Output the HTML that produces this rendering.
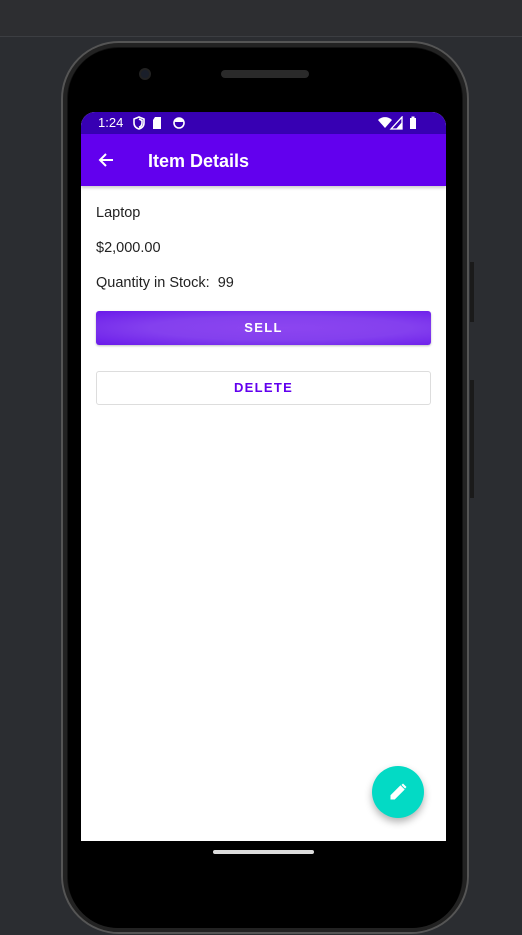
<!DOCTYPE html>
<html><head><meta charset="utf-8"><style>
*{margin:0;padding:0;box-sizing:border-box}
body{width:522px;height:935px;background:#2b2d31;position:relative;overflow:hidden;font-family:"Liberation Sans",sans-serif}
.topbar{position:absolute;left:0;top:0;width:522px;height:37px;background:#2d2e31;border-bottom:1px solid #3c3e42}
.phone{position:absolute;left:61px;top:41px;width:408px;height:893px;border-radius:58px;background:#111;border:2px solid #555;box-shadow:inset 0 0 0 4px #222}
.phone2{position:absolute;left:68px;top:48px;width:394px;height:880px;border-radius:50px;background:#000}
.cam{position:absolute;left:139px;top:68px;width:12px;height:12px;border-radius:50%;background:#1a1f2a;border:2px solid #222}
.spk{position:absolute;left:221px;top:70px;width:88px;height:8px;border-radius:4px;background:#2a2a2a}
.btnside{position:absolute;background:#1a1a1a;width:4px;left:470px}
.screen{position:absolute;left:81px;top:112px;width:365px;height:729px;background:#fff;border-radius:14px 14px 0 0;overflow:hidden}
.status{height:22px;background:#3700b3;color:#fff;font-size:13px;line-height:22px;padding-left:17px;position:relative}
.appbar{height:52px;background:#6200ee;color:#fff;position:relative;box-shadow:0 2px 3px rgba(0,0,0,.2)}
.appbar .t{position:absolute;left:67px;top:17px;font-size:18px;font-weight:bold}
.txt{position:absolute;left:15px;font-size:14.5px;color:#222}
.sell{position:absolute;left:15px;top:199px;width:335px;height:34px;border-radius:3px;background:radial-gradient(ellipse at 55% 50%,#8c45f0 0%,#8440ee 50%,#6a1aea 100%);color:#fff;font-size:13px;font-weight:bold;letter-spacing:1.3px;text-align:center;line-height:34px;box-shadow:0 1px 2px rgba(0,0,0,.25)}
.del{position:absolute;left:15px;top:259px;width:335px;height:34px;border-radius:3px;border:1px solid #ddd;color:#6200ee;font-size:13px;font-weight:bold;letter-spacing:1.3px;text-align:center;line-height:32px}
.fab{position:absolute;left:291px;top:654px;width:52px;height:52px;border-radius:50%;background:#03dac5;box-shadow:0 4px 8px rgba(0,0,0,.3)}
.home{position:absolute;left:213px;top:850px;width:101px;height:4px;border-radius:2px;background:#ddd}
</style></head><body>
<div class="topbar"></div>
<div class="btnside" style="top:262px;height:60px"></div>
<div class="btnside" style="top:380px;height:118px"></div>
<div class="phone"></div>
<div class="phone2"></div>
<div class="cam"></div>
<div class="spk"></div>
<div class="screen">
 <div class="status">1:24
  <svg style="position:absolute;left:52px;top:4px" width="70" height="14" viewBox="0 0 70 14" fill="#fff">
   <path d="M6 1L1 3v4c0 3 2 5 5 6c3-1 5-3 5-6V3z M6 3l3 1.5v2.5c0 2-1 3.5-3 4.3" fill="none" stroke="#fff" stroke-width="1.6"/>
   <path d="M22 1h6v12h-8V4z"/>
   <circle cx="46" cy="7" r="5" fill="none" stroke="#fff" stroke-width="1.6"/><path d="M42 6a4 4 0 0 1 8 0z"/>
  </svg>
  <svg style="position:absolute;left:297px;top:4px" width="55" height="14" viewBox="0 0 55 14" fill="#fff">
   <path d="M0 4a10 10 0 0 1 14 0L7 12z"/>
   <path d="M24 1v12h-11z" fill="none" stroke="#fff" stroke-width="1.3"/><path d="M24 6v7h-6z"/>
   <rect x="32" y="2" width="6" height="11"/><rect x="33.5" y="0.5" width="3" height="2"/>
  </svg>
 </div>
 <div class="appbar">
  <svg style="position:absolute;left:17px;top:18px" width="16" height="16" viewBox="0 0 16 16"><path d="M15 8H2M8 2L2 8l6 6" fill="none" stroke="#fff" stroke-width="2"/></svg>
  <div class="t">Item Details</div>
 </div>
 <div class="txt" style="top:93px">Laptop</div>
 <div class="txt" style="top:128px">$2,000.00</div>
 <div class="txt" style="top:163px">Quantity in Stock:&nbsp; 99</div>
 <div class="sell">SELL</div>
 <div class="del">DELETE</div>
 <div class="fab"><svg style="position:absolute;left:17px;top:17px" width="18" height="18" viewBox="0 0 18 18"><path d="M2 16v-3.5L11.5 3l3.5 3.5L5.5 16z M13 1.5l3.5 3.5" fill="#fff" stroke="#fff" stroke-width="1"/><path d="M12.5 2l1.5-1.5 3.5 3.5-1.5 1.5z" fill="#fff"/></svg></div>
</div>
<div class="home"></div>
</body></html>
